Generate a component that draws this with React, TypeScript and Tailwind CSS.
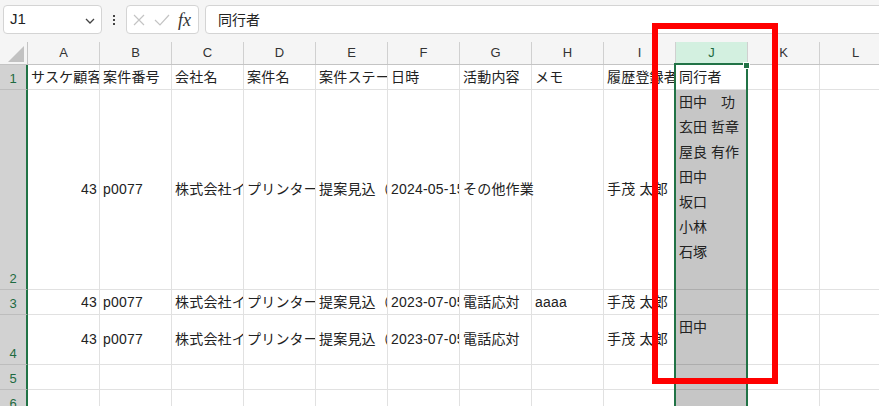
import React from 'react';

const COLS = ['A', 'B', 'C', 'D', 'E', 'F', 'G', 'H', 'I', 'J', 'K', 'L'];

interface Row {
  num: string;
  h: string;
  cells: Record<string, string | string[]>;
}

const ROWS: Row[] = [
  {
    num: '1',
    h: 'h-[25px]',
    cells: {
      A: 'サスケ顧客ID',
      B: '案件番号',
      C: '会社名',
      D: '案件名',
      E: '案件ステータス',
      F: '日時',
      G: '活動内容',
      H: 'メモ',
      I: '履歴登録者',
      J: '同行者',
    },
  },
  {
    num: '2',
    h: 'h-[200px]',
    cells: {
      A: '43',
      B: 'p0077',
      C: '株式会社イーエックス',
      D: 'プリンター導入',
      E: '提案見込（Cランク）',
      F: '2024-05-15 10:00',
      G: 'その他作業',
      I: '手茂 太郎',
      J: ['田中　功', '玄田 哲章', '屋良 有作', '田中', '坂口', '小林', '石塚'],
    },
  },
  {
    num: '3',
    h: 'h-[25px]',
    cells: {
      A: '43',
      B: 'p0077',
      C: '株式会社イーエックス',
      D: 'プリンター導入',
      E: '提案見込（Cランク）',
      F: '2023-07-05 14:00',
      G: '電話応対',
      H: 'aaaa',
      I: '手茂 太郎',
    },
  },
  {
    num: '4',
    h: 'h-[50px]',
    cells: {
      A: '43',
      B: 'p0077',
      C: '株式会社イーエックス',
      D: 'プリンター導入',
      E: '提案見込（Cランク）',
      F: '2023-07-05 15:00',
      G: '電話応対',
      I: '手茂 太郎',
      J: ['田中'],
    },
  },
  { num: '5', h: 'h-[25px]', cells: {} },
  { num: '6', h: 'h-[25px]', cells: {} },
];

function Cell({ col, value, rowIdx }: { col: string; value?: string | string[]; rowIdx: number }) {
  const isJ = col === 'J';
  const active = isJ && rowIdx === 0;
  const bg = isJ && !active ? 'bg-[#c6c6c6] border-[#adadad]' : 'border-[#e1e1e1]';
  if (Array.isArray(value)) {
    return (
      <div className={`w-[72px] shrink-0 h-full border-r border-b ${bg} pl-[3px] overflow-hidden`}>
        {value.map((l, i) => (
          <div key={i} className="h-[25px] leading-[25px] whitespace-pre">
            {l}
          </div>
        ))}
      </div>
    );
  }
  const numeric = col === 'A' && rowIdx > 0;
  const spill = col === 'G' && rowIdx === 1;
  return (
    <div
      className={`w-[72px] shrink-0 h-full border-r border-b ${bg} flex items-center ${
        numeric ? 'justify-end pr-[2px]' : 'pl-[3px]'
      } ${spill ? 'overflow-visible relative z-10' : 'overflow-hidden'}`}
    >
      <span className={`whitespace-nowrap tracking-[0.2px] ${spill ? '' : 'min-w-0 overflow-hidden'}`}>{value}</span>
    </div>
  );
}

export default function App() {
  return (
    <div
      className="relative w-[879px] h-[406px] overflow-hidden bg-white text-[14px] text-[#222]"
      style={{ fontFamily: '"Liberation Sans", "Noto Sans CJK JP", sans-serif' }}
    >
      {/* Formula bar */}
      <div className="h-[42px] bg-[#f5f5f5] flex items-start pt-[5px] pl-[3px] gap-[6px]">
        <div className="w-[99px] h-[29px] bg-white border border-[#d4d4d4] rounded-[4px] flex items-center justify-between pl-[6px] pr-[6px]">
          <span className="text-[15px] text-[#222]">J1</span>
          <svg width="10" height="6" viewBox="0 0 10 6" className="mt-[2px]">
            <path d="M1 1 L5 5 L9 1" fill="none" stroke="#444" strokeWidth="1.3" />
          </svg>
        </div>
        <div className="w-[12px] h-[29px] flex flex-col items-center justify-center gap-[2px]">
          <div className="w-[2px] h-[2px] bg-[#444]" />
          <div className="w-[2px] h-[2px] bg-[#444]" />
          <div className="w-[2px] h-[2px] bg-[#444]" />
        </div>
        <div className="w-[73px] h-[29px] bg-white border border-[#d4d4d4] rounded-[4px] flex items-center justify-between px-[5px]">
          <svg width="14" height="14" viewBox="0 0 14 14">
            <path d="M2 2 L12 12 M12 2 L2 12" stroke="#c4c4c4" strokeWidth="1.2" />
          </svg>
          <svg width="16" height="14" viewBox="0 0 16 14">
            <path d="M1 7 L6 12 L15 2" fill="none" stroke="#c4c4c4" strokeWidth="1.2" />
          </svg>
          <span
            className="italic text-[18px] text-[#333] leading-none pr-[2px]"
            style={{ fontFamily: '"Liberation Serif", "DejaVu Serif", serif' }}
          >
            fx
          </span>
        </div>
        <div className="flex-1 h-[29px] bg-white border border-[#d4d4d4] rounded-[4px] flex items-center pl-[12px] mr-[-10px]">
          <span className="text-[14px] text-[#222]" style={{ fontFamily: '"Noto Sans CJK JP", sans-serif' }}>
            同行者
          </span>
        </div>
      </div>

      {/* Column headers */}
      <div className="flex h-[23px] bg-[#f5f5f5] border-b border-[#c4c4c4]">
        <div className="w-[28px] shrink-0 border-r border-[#c4c4c4] flex items-end justify-end pr-[3px] pb-[2px]">
          <svg width="16" height="16" viewBox="0 0 16 16">
            <polygon points="16,0 16,16 0,16" fill="#c2c2c2" />
          </svg>
        </div>
        {COLS.map((c) => (
          <div
            key={c}
            className={`w-[72px] shrink-0 border-r border-[#d0d0d0] flex items-center justify-center text-[13px] ${
              c === 'J' ? 'bg-[#d3f0e0] text-[#1e6b41]' : 'text-[#333]'
            }`}
          >
            {c}
          </div>
        ))}
      </div>

      {/* Rows */}
      <div>
        {ROWS.map((r, ri) => (
          <div key={r.num} className={`flex ${r.h}`}>
            <div className="w-[28px] shrink-0 h-full bg-[#d2d2d2] border-r-2 border-r-[#217346] border-b border-b-[#bdbdbd] flex items-end justify-center pb-[1px] text-[13px] text-[#1e6b41]">
              {r.num}
            </div>
            {COLS.map((c) => (
              <Cell key={c} col={c} value={r.cells[c]} rowIdx={ri} />
            ))}
          </div>
        ))}
      </div>

      {/* Column J selection */}
      <div className="absolute left-[674px] top-[63px] w-[74px] h-[360px] border-2 border-[#217346] pointer-events-none" />
      <div className="absolute left-[743px] top-[62px] w-[7px] h-[7px] bg-[#217346] border border-white" />

      {/* Red highlight frame */}
      <div className="absolute left-[652px] top-[23px] w-[126px] h-[361px] border-[6px] border-[#ff0000] pointer-events-none" />
    </div>
  );
}
